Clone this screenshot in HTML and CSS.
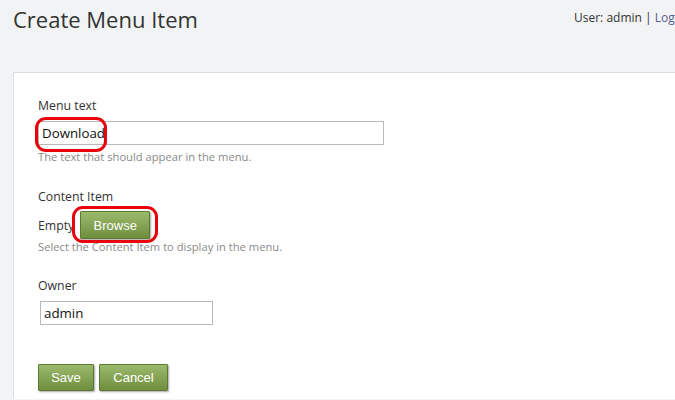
FILE: index.html
```html
<!DOCTYPE html>
<html>
<head>
<meta charset="utf-8">
<link rel="stylesheet" href="styles.css">
</head>
<body>
<div class="page">
  <header class="header">
    <h1 class="title">Create Menu Item</h1>
    <div class="user">User: admin | <a class="link" href="#">Logoff</a></div>
  </header>
  <main class="panel">
    <div class="field">
      <label class="label">Menu text</label>
      <div class="input-wrap">
        <input class="input input-wide" type="text" value="Download">
        <span class="mark mark-download"></span>
      </div>
      <div class="hint">The text that should appear in the menu.</div>
    </div>
    <div class="field field-gap-lg">
      <label class="label">Content Item</label>
      <div class="row">
        <span class="empty">Empty</span>
        <span class="btn-wrap">
          <button class="btn btn-browse">Browse</button>
          <span class="mark mark-browse"></span>
        </span>
      </div>
      <div class="hint hint-tight">Select the Content Item to display in the menu.</div>
    </div>
    <div class="field field-gap">
      <label class="label">Owner</label>
      <input class="input input-owner" type="text" value="admin">
    </div>
    <div class="actions">
      <button class="btn btn-save">Save</button>
      <button class="btn btn-cancel">Cancel</button>
    </div>
  </main>
</div>
</body>
</html>
```
FILE: styles.css
```css
html, body {
  margin: 0;
  padding: 0;
  overflow: hidden;
  background: #f2f3f5;
}
.page {
  width: 675px;
  height: 400px;
  overflow: hidden;
  font-family: "Open Sans", "Noto Sans", sans-serif;
  color: #333;
}
.header {
  display: flex;
  align-items: flex-start;
  height: 72px;
  padding: 0 0 0 13px;
  box-sizing: border-box;
}
.title {
  margin: 4px 0 0 0;
  font-size: 22px;
  font-weight: normal;
  color: #333;
  line-height: 30px;
  flex: 1;
}
.user {
  margin-top: 10px;
  font-size: 12px;
  line-height: 16px;
  color: #333;
  white-space: nowrap;
  flex: 0 0 101px;
  min-width: 0;
}
.link {
  color: #5b5b8f;
  text-decoration: none;
}
.panel {
  display: block;
  margin-left: 13px;
  background: #fff;
  border-top: 1px solid #dcdde0;
  border-left: 1px solid #dcdde0;
  padding: 24px 24px 0 24px;
  height: 327px;
  box-sizing: border-box;
}
.field {
  display: flex;
  flex-direction: column;
  align-items: flex-start;
}
.field-gap {
  margin-top: 22px;
}
.field-gap-lg {
  margin-top: 23px;
}
.label {
  font-size: 12.3px;
  line-height: 18px;
  color: #333;
  margin-bottom: 6px;
}
.input-wrap {
  position: relative;
}
.input {
  box-sizing: border-box;
  height: 24px;
  border: 1px solid #b9b9b9;
  padding: 0 3px;
  font-family: "Open Sans", "Noto Sans", sans-serif;
  font-size: 13.3px;
  color: #111;
  margin: 0;
}
.input-wide {
  width: 346px;
}
.input-owner {
  width: 173px;
  margin-left: 2px;
}
.hint {
  margin-top: 4px;
  font-size: 11.2px;
  line-height: 16px;
  color: #8a8a8a;
}
.hint-tight {
  margin-top: 0;
}
.row {
  display: flex;
  align-items: center;
  margin-top: -1px;
}
.empty {
  font-size: 12.3px;
  color: #333;
  margin-right: 6px;
}
.btn-wrap {
  position: relative;
  display: inline-flex;
}
.btn {
  box-sizing: border-box;
  height: 27px;
  border: 1px solid #5c7a34;
  border-radius: 1px;
  background: linear-gradient(#9cba6c, #6e8e3e);
  box-shadow: 1px 1px 2px rgba(0, 0, 0, 0.35);
  color: #fff;
  font-family: "Liberation Sans", Arial, sans-serif;
  font-size: 13px;
  padding: 0;
  margin: 0;
}
.btn-browse {
  width: 70px;
  height: 28px;
}
.actions {
  display: flex;
  gap: 5px;
  margin-top: 39px;
}
.btn-save {
  width: 56px;
}
.btn-cancel {
  width: 69px;
}
.mark {
  position: absolute;
  border: 3px solid #e8000b;
  border-radius: 11px;
  box-sizing: border-box;
  pointer-events: none;
}
.mark-download {
  left: -3px;
  top: -4px;
  width: 72px;
  height: 35px;
}
.mark-browse {
  left: -8px;
  top: -5px;
  width: 86px;
  height: 37px;
}
```
